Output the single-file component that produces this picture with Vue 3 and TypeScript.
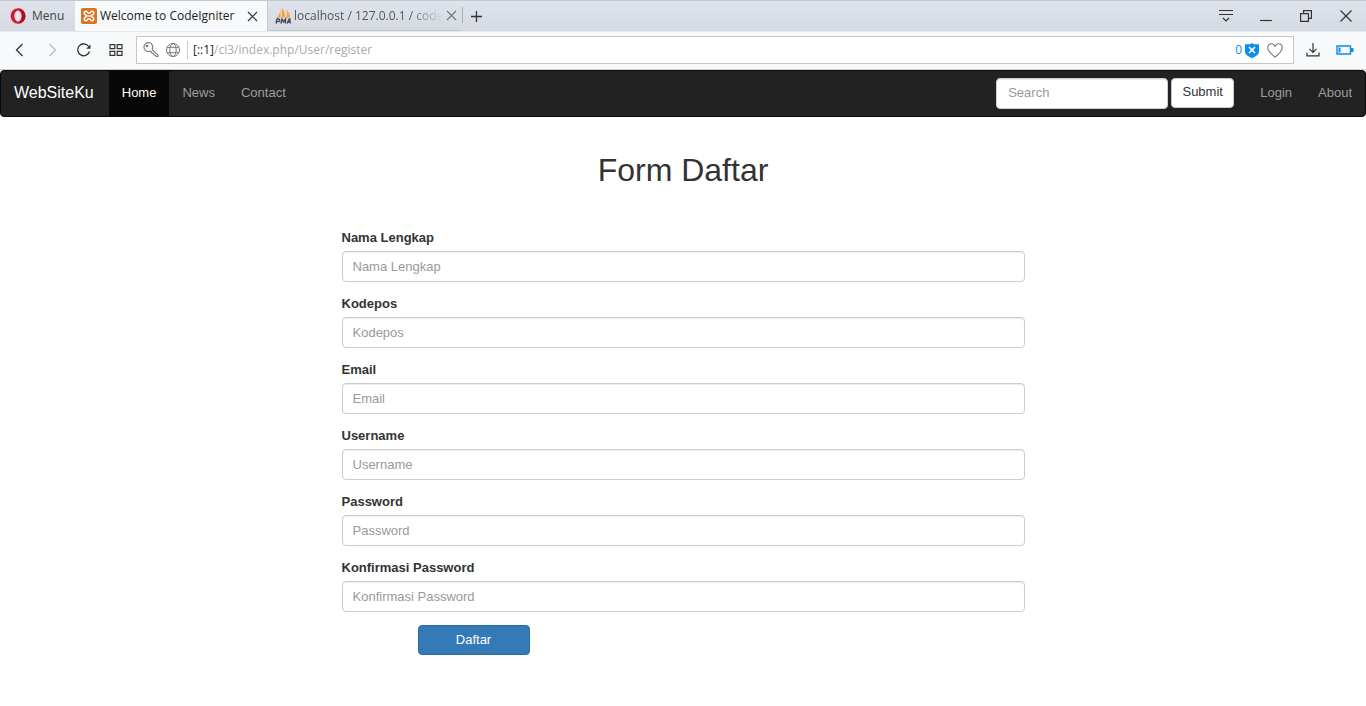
<script setup lang="ts">
import { ref } from 'vue'

interface Field {
  id: string
  label: string
  type: string
}

const fields: Field[] = [
  { id: 'nama', label: 'Nama Lengkap', type: 'text' },
  { id: 'kodepos', label: 'Kodepos', type: 'text' },
  { id: 'email', label: 'Email', type: 'email' },
  { id: 'username', label: 'Username', type: 'text' },
  { id: 'password', label: 'Password', type: 'password' },
  { id: 'konfirmasi', label: 'Konfirmasi Password', type: 'password' },
]

const links: string[] = ['Home', 'News', 'Contact']
const active = ref('Home')
const values = ref<Record<string, string>>({})
const search = ref('')
</script>

<template>
  <div class="window">
    <header class="browser">
      <div class="tabs">
        <button class="menu" type="button">
          <svg width="16" height="16" viewBox="0 0 16 16">
            <ellipse cx="8" cy="8" rx="5.6" ry="6" fill="none" stroke="#e0142c" stroke-width="3.6" />
            <path d="M8 .4a7.6 7.6 0 0 1 0 15.200c2.300-.6 3.600-3.600 3.600-7.600S10.300 1 8 .4z" fill="#b5101f" />
            <ellipse cx="8" cy="8" rx="3.200" ry="5.600" fill="#e4e8ee" />
          </svg>
          <span>Menu</span>
        </button>
        <div class="tab tab-active">
          <svg width="16" height="16" viewBox="0 0 16 16">
            <rect width="16" height="16" rx="2" fill="#dd7420" />
            <path d="M5 3.200c-2 0-2.300 2-1.200 3.100L5 7.200v1.600L3.800 9.700C2.700 10.800 3 12.800 5 12.800c1.500 0 1.200-2 3-2s1.500 2 3 2c2 0 2.300-2 1.200-3.100L11 8.800V7.200l1.200-.9C13.300 5.200 13 3.200 11 3.200c-1.500 0-1.200 2-3 2s-1.500-2-3-2z" fill="none" stroke="#fff" stroke-width="1.500" />
            <path d="M6 8h4" stroke="#fff" stroke-width="1.300" />
          </svg>
          <span class="title">Welcome to CodeIgniter</span>
          <button class="icon" type="button" aria-label="Close tab">
            <svg width="11" height="11" viewBox="0 0 11 11" stroke="#333" stroke-width="1.200"><path d="M1 1l9 9M10 1l-9 9" /></svg>
          </button>
        </div>
        <div class="tab tab-idle">
          <svg width="16" height="16" viewBox="0 0 16 16">
            <path d="M5.500 1.500v8H1.500c2-1.800 3.600-4.500 4-8zM6.800 0c2.700 2.500 3.500 5.500 3 9.500h-3zM11.500 2c2.500 2 3.500 4.500 3.500 7.500h-3.700c.7-2.500.8-5 .2-7.500z" fill="#f6a13a" />
            <path d="M1 15.500l1-4.500h2q1.500 1.400 0 2.600H1.600M6 15.500l1-4.500 1.400 2.700L10.600 11l-.3 4.500M12 15.500l2.200-4.500h.6l.5 4.500M12.600 14h2.600" fill="none" stroke="#45475a" stroke-width="1.400" />
          </svg>
          <span class="title fade">localhost / 127.0.0.1 / code</span>
          <button class="icon" type="button" aria-label="Close tab">
            <svg width="11" height="11" viewBox="0 0 11 11" stroke="#777" stroke-width="1.200"><path d="M1 1l9 9M10 1l-9 9" /></svg>
          </button>
        </div>
        <button class="icon plus" type="button" aria-label="New tab">
          <svg width="11" height="11" viewBox="0 0 11 11" stroke="#333" stroke-width="1.300"><path d="M5.500 0v11M0 5.500h11" /></svg>
        </button>
        <div class="controls">
          <button class="icon" type="button" aria-label="Tab menu">
            <svg width="16" height="14" viewBox="0 0 16 14" fill="none" stroke="#333" stroke-width="1.200"><path d="M1 1.500h14M1 5.500h14M5 9l3 3 3-3" /></svg>
          </button>
          <button class="icon" type="button" aria-label="Minimize">
            <svg width="12" height="12" viewBox="0 0 12 12" stroke="#333" stroke-width="1.200"><path d="M0 10.500h12" /></svg>
          </button>
          <button class="icon" type="button" aria-label="Restore">
            <svg width="12" height="12" viewBox="0 0 12 12" fill="none" stroke="#333" stroke-width="1.200"><path d="M.6 3.600h7.800v7.800H.6zM3.600 3.600v-3h7.800v7.800h-3" /></svg>
          </button>
          <button class="icon" type="button" aria-label="Close">
            <svg width="12" height="12" viewBox="0 0 12 12" stroke="#333" stroke-width="1.200"><path d="M.5.5l11 11M11.500.5l-11 11" /></svg>
          </button>
        </div>
      </div>

      <div class="toolbar">
        <div class="history">
          <button class="icon" type="button" aria-label="Back">
            <svg width="14" height="14" viewBox="0 0 14 14" fill="none" stroke="#333" stroke-width="1.300"><path d="M9.500 1l-6 6 6 6" /></svg>
          </button>
          <button class="icon" type="button" aria-label="Forward">
            <svg width="14" height="14" viewBox="0 0 14 14" fill="none" stroke="#bbb" stroke-width="1.300"><path d="M4.500 1l6 6-6 6" /></svg>
          </button>
          <button class="icon" type="button" aria-label="Reload">
            <svg width="14" height="14" viewBox="0 0 14 14" fill="none" stroke="#333" stroke-width="1.300"><path d="M12.500 8.500A6 6 0 1 1 11.800 3.500" /><path d="M13.500 1.500v4.300H9.200z" fill="#333" stroke="none" /></svg>
          </button>
          <button class="icon" type="button" aria-label="Speed dial">
            <svg width="14" height="12" viewBox="0 0 14 12" fill="none" stroke="#333" stroke-width="1.200"><path d="M1 .6h4.800v4H1zM8.200.6H13v4H8.200zM1 7.400h4.800v4H1zM8.200 7.400H13v4H8.200z" /></svg>
          </button>
        </div>
        <div class="address">
          <svg width="16" height="16" viewBox="0 0 16 16" fill="none" stroke="#777" stroke-width="1.100"><path d="M9 7.500A4.400 4.400 0 1 0 6.800 9.200L8.200 9.600l.6 1.400 1.500.4.500 1.500 1.500.4 1 1.200h1.600v-1.600L9 7.500" /><circle cx="4" cy="4" r=".8" /></svg>
          <svg width="16" height="16" viewBox="0 0 16 16" fill="none" stroke="#777"><circle cx="8" cy="8" r="6.500" /><ellipse cx="8" cy="8" rx="3.200" ry="6.500" /><path d="M2.200 5.300h11.600M2.200 10.700h11.600" /></svg>
          <div class="url"><span class="host">[::1]</span>/ci3/index.php/User/register</div>
          <div class="badges">
            <span class="count">0</span>
            <svg width="14" height="15" viewBox="0 0 14 15"><path d="M7 0l2 1.200h5V8.500c0 3-3 5-7 6.500-4-1.500-7-3.500-7-6.500V1.200h5z" fill="#0d8eeb" /><path d="M4 4l6 6M10 4l-6 6" stroke="#fff" stroke-width="1.700" /></svg>
            <svg class="heart" width="16" height="15" viewBox="0 0 16 15" fill="none" stroke="#777" stroke-width="1.100"><path d="M8 14C4 11 .8 8 .8 4.800.8 2.500 2.300.8 4.300.8 6 .8 7.300 1.700 8 3.400 8.700 1.700 10 .8 11.700.8c2 0 3.500 1.700 3.500 4C15.200 8 12 11 8 14z" /></svg>
          </div>
        </div>
        <div class="actions">
          <button class="icon" type="button" aria-label="Downloads">
            <svg width="14" height="14" viewBox="0 0 14 14" fill="none" stroke="#333" stroke-width="1.200"><path d="M7 0v9M3.500 5.800L7 9.300l3.500-3.500M1 9.500v3.300h12V9.500" /></svg>
          </button>
          <button class="icon" type="button" aria-label="Battery">
            <svg width="18" height="10" viewBox="0 0 18 10"><path d="M1 1h13.500v8H1z" fill="none" stroke="#0d8eeb" stroke-width="1.400" /><path d="M15 3h2.500v4H15zM2.500 2.500h2v5h-2z" fill="#0d8eeb" /></svg>
          </button>
        </div>
      </div>
    </header>

    <nav class="navbar">
      <a class="brand" href="#">WebSiteKu</a>
      <a v-for="l in links" :key="l" href="#" class="link" :class="{ current: l === active }" @click.prevent="active = l">{{ l }}</a>
      <form class="search" @submit.prevent>
        <input v-model="search" class="control" type="text" placeholder="Search" aria-label="Search" />
        <button class="submit" type="submit">Submit</button>
      </form>
      <a class="link" href="#">Login</a>
      <a class="link" href="#">About</a>
    </nav>

    <main class="content">
      <h1>Form Daftar</h1>
      <form novalidate @submit.prevent>
        <div v-for="f in fields" :key="f.id" class="group">
          <label :for="f.id">{{ f.label }}</label>
          <input :id="f.id" v-model="values[f.id]" class="control" :type="f.type" :placeholder="f.label" />
        </div>
        <button class="primary" type="submit">Daftar</button>
      </form>
    </main>
  </div>
</template>

<style>
body {
  background: #fff;
}
</style>

<style scoped>
* {
  box-sizing: border-box;
}

.window {
  font: 13px/18px "Liberation Sans", Arial, sans-serif;
  color: #333;
}

button,
input {
  font: inherit;
}

svg {
  display: block;
  flex: none;
}

.browser {
  font: 12px/16px "Open Sans", "Noto Sans", sans-serif;
  background: #f7f9fa;
}

.tabs {
  display: flex;
  height: 31px;
  background: linear-gradient(#dfe4ec, #d5dae2);
  border-top: 1px solid #c3c7ce;
}

.menu {
  display: flex;
  align-items: center;
  gap: 6px;
  width: 75px;
  padding: 0 0 0 10px;
  border: 0;
  background: none;
  color: #444;
}

.icon {
  display: flex;
  align-items: center;
  justify-content: center;
  padding: 0;
  border: 0;
  background: none;
}

.tab {
  display: flex;
  align-items: center;
  gap: 3px;
  padding: 0 9px 0 6px;
}

.tab-active {
  width: 192px;
  background: #f7f9fa;
  color: #222;
}

.tab-idle {
  width: 195px;
  padding-left: 7px;
  border-left: 1px solid #c3c7ce;
  border-bottom: 1px solid #c3c7ce;
  color: #555;
}

.title {
  flex: 1;
  white-space: nowrap;
}

.fade {
  mask-image: linear-gradient(90deg, #000 115px, transparent 148px);
}

.plus {
  width: 29px;
  position: relative;
}

.plus::before {
  content: "";
  position: absolute;
  left: 0;
  top: 6px;
  height: 16px;
  border-left: 1px solid #aab0b8;
}

.controls {
  display: flex;
  margin-left: auto;
}

.controls .icon {
  width: 40px;
}

.toolbar {
  display: flex;
  align-items: center;
  height: 39px;
  padding-bottom: 1px;
  border-top: 1px solid #e6e9ec;
  border-bottom: 1px solid #d0d0d0;
}

.history {
  display: flex;
  gap: 18px;
  width: 136px;
  padding-left: 13px;
}

.address {
  display: flex;
  align-items: center;
  flex: 1;
  gap: 6px;
  height: 28px;
  padding: 0 10px 0 6px;
  border: 1px solid #c4c7ca;
  background: #fff;
}

.url {
  flex: 1;
  padding-left: 5px;
  border-left: 1px solid #ccc;
  line-height: 18px;
  color: #aaa;
}

.host {
  color: #222;
}

.badges {
  display: flex;
  align-items: center;
  gap: 3px;
}

.count {
  color: #0d8eeb;
}

.heart {
  margin-left: 5px;
}

.actions {
  display: flex;
  gap: 16px;
  padding: 0 12px;
}

.navbar {
  display: flex;
  height: 47px;
  border: 1px solid #080808;
  border-radius: 4px;
  background: #222;
}

.brand,
.link {
  display: flex;
  align-items: center;
  padding: 0 13px 1px;
  color: #9d9d9d;
  text-decoration: none;
}

.brand {
  padding-right: 15px;
  font-size: 16px;
  color: #fff;
}

.current {
  background: #080808;
  color: #fff;
}

.search {
  display: flex;
  gap: 3px;
  margin-left: auto;
  padding: 7px 13px 0 0;
}

.control {
  display: block;
  width: 100%;
  height: 31px;
  padding: 5px 10px;
  border: 1px solid #ccc;
  border-radius: 4px;
  background: #fff;
  box-shadow: inset 0 1px 1px rgba(0, 0, 0, 0.075);
  color: #555;
}

.control::placeholder {
  color: #999;
  opacity: 1;
}

.search .control {
  width: 172px;
  padding: 4px 11px 6px;
}

.submit {
  width: 63px;
  height: 30px;
  padding: 0 0 2px;
  border: 1px solid #ccc;
  border-radius: 4px;
  background: #fff;
  color: #333;
}

.content {
  width: 50%;
  margin: 0 auto;
  padding-top: 35px;
}

h1 {
  margin: 0 0 41px;
  font-size: 32px;
  line-height: 36px;
  font-weight: 400;
  text-align: center;
}

.group {
  margin-bottom: 13px;
}

label {
  display: block;
  margin-bottom: 4px;
  font-weight: 700;
}

.primary {
  display: block;
  width: 112px;
  height: 30px;
  margin-left: 76px;
  padding: 0 0 1px;
  border: 1px solid #2e6da4;
  border-radius: 4px;
  background: #337ab7;
  color: #fff;
}
</style>
